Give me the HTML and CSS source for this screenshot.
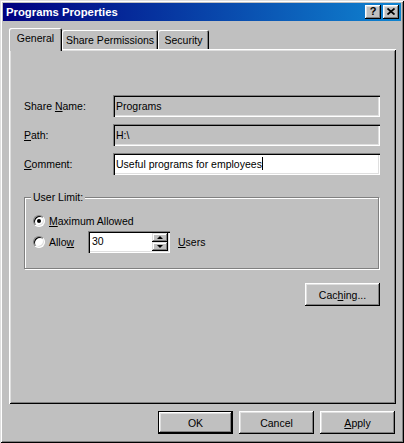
FILE: index.html
```html
<!DOCTYPE html>
<html>
<head>
<meta charset="utf-8">
<title>Programs Properties</title>
<link rel="stylesheet" href="styles.css">
</head>
<body>
<div class="window">
  <div class="titlebar">
    <span class="title">Programs Properties</span>
    <div class="title-buttons">
      <span class="tbtn help">?</span>
      <span class="tbtn close"><svg width="8" height="7" viewBox="0 0 8 7"><path d="M0.5 0.5 L7.5 6.5 M7.5 0.5 L0.5 6.5" stroke="#000" stroke-width="1.7" fill="none"/></svg></span>
    </div>
  </div>
  <div class="content">
    <div class="tabs">
      <div class="tab active tab-general">General</div>
      <div class="tab tab-share">Share Permissions</div>
      <div class="tab tab-security">Security</div>
    </div>
    <div class="panel">
      <div class="row">
        <span class="label">Share <u>N</u>ame:</span>
        <div class="field">Programs</div>
      </div>
      <div class="row">
        <span class="label"><u>P</u>ath:</span>
        <div class="field">H:\</div>
      </div>
      <div class="row">
        <span class="label"><u>C</u>omment:</span>
        <div class="field editable">Useful programs for employees<span class="caret"></span></div>
      </div>
      <div class="group">
        <span class="group-label">User Limit:</span>
        <div class="radio-row first">
          <span class="radio checked"></span>
          <span class="radio-text"><u>M</u>aximum Allowed</span>
        </div>
        <div class="radio-row second">
          <span class="radio"></span>
          <span class="radio-text allow">Allo<u>w</u></span>
          <div class="spin">
            <span class="spin-value">30</span>
            <div class="spin-btns">
              <span class="spin-btn"><span class="arrow up"></span></span>
              <span class="spin-btn"><span class="arrow down"></span></span>
            </div>
          </div>
          <span class="users"><u>U</u>sers</span>
        </div>
      </div>
      <div class="caching-row">
        <button class="btn">Cac<u>h</u>ing...</button>
      </div>
    </div>
    <div class="footer">
      <button class="btn default">OK</button>
      <button class="btn">Cancel</button>
      <button class="btn"><u>A</u>pply</button>
    </div>
  </div>
</div>
</body>
</html>
```
FILE: styles.css
```css
* { box-sizing: border-box; }
html, body { margin: 0; padding: 0; }
body {
  font-family: "Liberation Sans", Arial, sans-serif;
  font-size: 10.5px;
  color: #000;
  background: #c0c0c0;
}
u { text-decoration: underline; text-underline-offset: 1px; }

.window {
  width: 404px;
  height: 443px;
  background: #c0c0c0;
  padding: 3px;
  display: flex;
  flex-direction: column;
  box-shadow: inset 1px 1px #dfdfdf, inset -1px -1px #000, inset 2px 2px #fff, inset -2px -2px #808080;
}

.titlebar {
  height: 18px;
  flex: none;
  display: flex;
  align-items: center;
  justify-content: space-between;
  padding: 0 2px 0 3px;
  background: linear-gradient(to right, #000080, #1084d0);
}
.title { color: #fff; font-weight: bold; font-size: 11.3px; }
.title-buttons { display: flex; gap: 2px; }
.tbtn {
  width: 16px;
  height: 14px;
  background: #c0c0c0;
  box-shadow: inset -1px -1px #000, inset 1px 1px #fff, inset -2px -2px #808080, inset 2px 2px #dfdfdf;
  display: flex;
  align-items: center;
  justify-content: center;
  font-weight: bold;
  font-size: 11px;
  line-height: 1;
  padding-bottom: 1px;
}

.content {
  flex: 1;
  display: flex;
  flex-direction: column;
  padding: 7px 5px 0 6px;
}

.tabs {
  display: flex;
  align-items: flex-end;
  height: 23px;
  margin-bottom: -2px;
  position: relative;
  z-index: 1;
}
.tab {
  height: 19px;
  margin-bottom: 2px;
  background: #c0c0c0;
  text-align: center;
  padding-top: 4px;
  border-top-left-radius: 2px;
  border-top-right-radius: 2px;
  box-shadow: inset 1px 1px #fff, inset -1px 0 #000, inset -2px 0 #808080;
}
.tab.active {
  height: 23px;
  margin-bottom: 0;
  padding-top: 4px;
}
.tab-general { width: 53px; }
.tab-share { width: 96px; }
.tab-security { width: 51px; }

.panel {
  height: 355px;
  flex: none;
  padding: 46px 16px 0 15px;
  box-shadow: inset 1px 1px #fff, inset -1px -1px #000, inset 2px 2px #dfdfdf, inset -2px -2px #808080;
  display: flex;
  flex-direction: column;
}

.row {
  display: flex;
  align-items: center;
  height: 22px;
}
.row + .row { margin-top: 7px; }
.label { width: 89px; flex: none; }
.field {
  flex: 1;
  height: 22px;
  padding: 0 3px 1px;
  display: flex;
  align-items: center;
  box-shadow: inset 1px 1px #808080, inset 2px 2px #000, inset -1px -1px #fff, inset -2px -2px #dfdfdf;
}
.field.editable { background: #fff; }
.caret {
  display: inline-block;
  width: 1px;
  height: 13px;
  background: #000;
}

.group {
  position: relative;
  margin-top: 22px;
  margin-right: 1px;
  border: 1px solid #808080;
  box-shadow: inset 1px 1px #fff, 1px 1px 0 #fff;
  padding: 15px 8px 15px 8px;
}
.group-label {
  position: absolute;
  top: -7px;
  left: 6px;
  padding: 0 2px;
  background: #c0c0c0;
  line-height: 12px;
}
.radio-row { display: flex; align-items: center; }
.radio-row.first { height: 16px; }
.radio-row.second { height: 22px; margin-top: 2px; }
.radio {
  width: 12px;
  height: 12px;
  flex: none;
  border-radius: 50%;
  background: #fff;
  border: 1px solid;
  border-color: #808080 #fff #fff #808080;
  box-shadow: inset 1px 1px #000, inset -1px -1px #dfdfdf;
  display: flex;
  align-items: center;
  justify-content: center;
}
.radio.checked::after {
  content: "";
  width: 4px;
  height: 4px;
  border-radius: 50%;
  background: #000;
}
.radio-text { margin-left: 4px; }
.radio-text.allow { width: 39px; }
.spin {
  width: 82px;
  height: 22px;
  background: #fff;
  padding: 2px;
  display: flex;
  box-shadow: inset 1px 1px #808080, inset 2px 2px #000, inset -1px -1px #fff, inset -2px -2px #dfdfdf;
}
.spin-value { flex: 1; padding: 0 0 2px 2px; display: flex; align-items: center; }
.spin-btns { width: 16px; display: flex; flex-direction: column; }
.spin-btn {
  flex: 1;
  background: #c0c0c0;
  display: flex;
  align-items: center;
  justify-content: center;
  box-shadow: inset -1px -1px #000, inset 1px 1px #dfdfdf, inset -2px -2px #808080, inset 2px 2px #fff;
}
.arrow { width: 0; height: 0; border-left: 3px solid transparent; border-right: 3px solid transparent; }
.arrow.up { border-bottom: 3px solid #000; }
.arrow.down { border-top: 3px solid #000; }
.users { margin-left: 8px; }

.caching-row {
  display: flex;
  justify-content: flex-end;
  margin-top: 14px;
}

.btn {
  width: 75px;
  height: 23px;
  background: #c0c0c0;
  border: none;
  padding: 0;
  font: inherit;
  color: #000;
  box-shadow: inset -1px -1px #000, inset 1px 1px #fff, inset -2px -2px #808080, inset 2px 2px #dfdfdf;
}
.btn.default { border: 1px solid #000; }

.footer {
  display: flex;
  justify-content: flex-end;
  gap: 6px;
  margin-top: 7px;
  padding-right: 1px;
}
```
